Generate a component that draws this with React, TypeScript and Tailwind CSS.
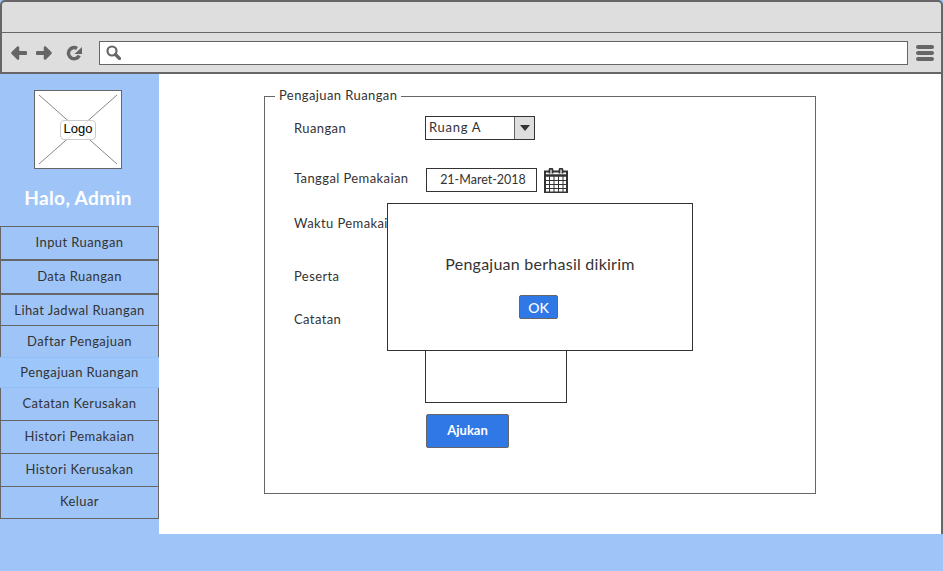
const menuItems = [
  { label: 'Input Ruangan', className: 'h-[35px] border border-b-2 border-[#666] pb-px' },
  { label: 'Data Ruangan', className: 'h-[35px] border border-b-2 border-[#666] pb-px' },
  { label: 'Lihat Jadwal Ruangan', className: 'h-[32px] border border-[#666] pt-px' },
  { label: 'Daftar Pengajuan', className: 'h-[33px] border border-[#666]' },
  { label: 'Pengajuan Ruangan', className: 'relative h-[31px] border-y border-[#94bef6] bg-[#9dc6fb]' },
  { label: 'Catatan Kerusakan', className: 'h-[34px] border border-[#666]' },
  { label: 'Histori Pemakaian', className: 'h-[34px] border border-[#666]' },
  { label: 'Histori Kerusakan', className: 'h-[34px] border border-[#666]' },
  { label: 'Keluar', className: 'h-[33px] border border-[#666] pb-[2px]' }
];

function BackIcon() {
  return (
    <svg width="16" height="14" viewBox="0 0 16 14" fill="#666" stroke="#666" strokeLinejoin="round" strokeLinecap="round">
      <path d="M7 1.500 1.500 7 7 12.500z" strokeWidth="2.500" />
      <path d="M7 7h7.500" strokeWidth="4" />
    </svg>
  );
}

function ForwardIcon() {
  return (
    <svg width="16" height="14" viewBox="0 0 16 14" fill="#666" stroke="#666" strokeLinejoin="round" strokeLinecap="round">
      <path d="M9 1.500 14.500 7 9 12.500z" strokeWidth="2.500" />
      <path d="M1.500 7H9" strokeWidth="4" />
    </svg>
  );
}

function ReloadIcon() {
  return (
    <svg width="16" height="16" viewBox="0 0 16 16" fill="none">
      <path d="M13.200 10.500A5.600 5.600 0 1 1 11 3.400" stroke="#666" strokeWidth="3.500" />
      <path d="M16 2v7H8.500z" fill="#666" />
    </svg>
  );
}

function SearchIcon() {
  return (
    <svg width="15" height="15" viewBox="0 0 15 15" fill="none" stroke="#666">
      <circle cx="6" cy="6" r="4.500" strokeWidth="2.200" />
      <path d="M9.500 9.500 13.500 13.500" strokeWidth="3.200" strokeLinecap="round" />
    </svg>
  );
}

function CalendarIcon() {
  return (
    <svg width="24" height="25" viewBox="0 0 24 25" fill="none" stroke="#333">
      <rect x="1" y="3.500" width="22" height="21" fill="#fff" strokeWidth="2" />
      <path d="M1 7.500h22" strokeWidth="2.500" />
      <path d="M1 12.500h22M1 16.500h22M1 20.500h22M5.500 8v16M10 8v16M14.500 8v16M19 8v16" stroke="#333" />
      <path d="M5.500 5.500V2a1.500 1.500 0 0 1 3 0v3.500M15.500 5.500V2a1.500 1.500 0 0 1 3 0v3.500" fill="#fff" strokeWidth="1.800" />
    </svg>
  );
}

export default function App() {
  return (
    <div className="relative flex h-[571px] w-[943px] flex-col overflow-hidden bg-[#9fc5f8] font-['Lato','Noto_Sans',sans-serif] text-[13px] tracking-[0.4px] text-[#333]">
      <div className="h-[33px] rounded-t-[5px] border-x-2 border-t-2 border-b border-[#666] bg-[#dedede]" />
      <div className="flex h-[41px] items-center border-x-2 border-b-2 border-[#666] bg-[#dedede] pr-[7px] pl-[9px]">
        <BackIcon />
        <div className="ml-[9px]">
          <ForwardIcon />
        </div>
        <div className="ml-[14px]">
          <ReloadIcon />
        </div>
        <div className="ml-[17px] flex h-6 flex-1 items-center border border-[#666] bg-white pl-[6px]">
          <SearchIcon />
        </div>
        <div className="ml-2 flex w-[18px] flex-col gap-[2px]">
          <div className="h-1 rounded-full bg-[#666]" />
          <div className="h-1 rounded-full bg-[#666]" />
          <div className="h-1 rounded-full bg-[#666]" />
        </div>
      </div>

      <div className="flex h-[460px]">
        <aside className="flex w-[159px] shrink-0 flex-col">
          <div className="relative mt-4 ml-[34px] h-[79px] w-[88px] border border-[#666] bg-white">
            <svg className="size-full" viewBox="0 0 86 77" fill="none" stroke="#888">
              <path d="M4 4 82 73M82 4 4 73" />
            </svg>
            <div className="absolute top-[29px] left-[25px] flex h-5 w-9 items-center justify-center rounded-[4px] border border-[#ccc] bg-white/80 pb-[3px] font-['Liberation_Sans',sans-serif] tracking-normal text-black">
              Logo
            </div>
          </div>
          <div className="mt-[15px] h-[28px] pr-[3px] text-center text-[19px] leading-7 font-bold text-white">Halo, Admin</div>
          <nav className="mt-[14px] flex flex-col">
            {menuItems.map((item) => (
              <div key={item.label} className={`${item.className} -mt-px flex items-center justify-center first:mt-0`}>
                {item.label}
              </div>
            ))}
          </nav>
        </aside>

        <main className="flex-1 border-r-2 border-[#666] bg-white pt-[14px] pl-[105px]">
          <fieldset className="h-[406px] w-[552px] border border-[#666] pr-0 pl-[29px]">
            <legend className="-ml-[19px] px-1 pb-[2px] leading-[14px]">Pengajuan Ruangan</legend>
            <div className="mt-3 flex h-6 items-center">
              <label className="w-[131px] pt-px">Ruangan</label>
              <div className="flex h-6 w-[110px] border border-[#333]">
                <span className="flex-1 pl-[3px] leading-[21px] tracking-[0.7px]">Ruang A</span>
                <span className="flex w-5 items-center justify-center border-l border-[#666] bg-[#dedede]">
                  <span className="border-x-[5px] border-t-[6px] border-x-transparent border-t-[#333]" />
                </span>
              </div>
            </div>
            <div className="mt-7 flex h-6 items-center">
              <label className="w-[132px] pb-[3px]">Tanggal Pemakaian</label>
              <div className="flex h-6 w-[111px] items-center justify-center border border-[#333] pl-[3px] text-[12.5px] tracking-normal">21-Maret-2018</div>
              <div className="ml-[7px]">
                <CalendarIcon />
              </div>
            </div>
            <div className="mt-[19px] h-6 leading-6">Waktu Pemakaian</div>
            <div className="mt-[29px] h-6 leading-6">Peserta</div>
            <div className="mt-[19px] flex items-start">
              <label className="w-[131px] leading-6">Catatan</label>
              <div className="h-[96px] w-[142px] border border-[#333]" />
            </div>
            <button className="mt-[11px] ml-[132px] flex h-[34px] w-[83px] items-center justify-center rounded-[2px] border border-[#666] bg-[#2f78e6] font-bold tracking-normal text-white">
              Ajukan
            </button>
          </fieldset>
        </main>
      </div>

      <div className="absolute top-[203px] left-[387px] flex h-[148px] w-[306px] flex-col items-center border border-[#333] bg-white">
        <p className="mt-[50px] text-[16px] leading-5 tracking-[0.25px]">Pengajuan berhasil dikirim</p>
        <button className="mt-[21px] mr-[3px] flex h-6 w-[39px] items-center justify-center rounded-[2px] border border-[#666] bg-[#2f78e6] text-[14px] font-medium tracking-normal text-white">
          OK
        </button>
      </div>
    </div>
  );
}
